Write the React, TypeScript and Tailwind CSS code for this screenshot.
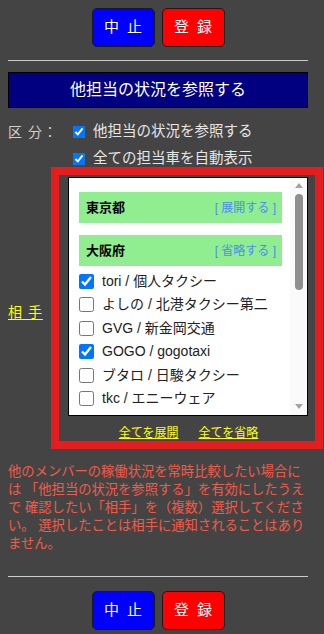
import React from "react";

const FONT = { fontFamily: '"Liberation Sans", "Noto Sans CJK JP", sans-serif' };

type Item = { id: string; name: string; checked: boolean };

const osaka: Item[] = [
  { id: "tori", name: "個人タクシー", checked: true },
  { id: "よしの", name: "北港タクシー第二", checked: false },
  { id: "GVG", name: "新金岡交通", checked: false },
  { id: "GOGO", name: "gogotaxi", checked: true },
  { id: "ブタロ", name: "日駿タクシー", checked: false },
  { id: "tkc", name: "エニーウェア", checked: false },
];

const ButtonRow = () => (
  <div className="flex justify-center gap-[7px]">
    <button className="w-[63px] h-[39px] rounded-[5px] border border-[#1a1a1a] bg-[#0000ff] text-white text-[15px] tracking-[2px] pl-[2px]">
      中 止
    </button>
    <button className="w-[63px] h-[39px] rounded-[5px] border border-[#1a1a1a] bg-[#ff0000] text-white text-[15px] tracking-[2px] pl-[2px]">
      登 録
    </button>
  </div>
);

const GroupHeader = ({ title, action }: { title: string; action: string }) => (
  <div className="h-[31px] bg-[#90ee90] flex items-center justify-between pl-[7px] pr-[6px]">
    <span className="text-[13px] font-bold text-black">{title}</span>
    <span className="text-[12px] text-[#4a8df0]">[ {action} ]</span>
  </div>
);

const Scrollbar = () => (
  <div className="w-[17px] shrink-0 bg-[#fafafa] flex flex-col items-center pt-[5px] pb-[6px]">
    <div className="w-0 h-0 border-l-[4px] border-r-[4px] border-b-[5px] border-l-transparent border-r-transparent border-b-[#a3a3a3]" />
    <div className="mt-[6px] w-[8px] h-[96px] rounded-full bg-[#8f8f8f]" />
    <div className="flex-1" />
    <div className="w-0 h-0 border-l-[4px] border-r-[4px] border-t-[5px] border-l-transparent border-r-transparent border-t-[#a3a3a3]" />
  </div>
);

export default function App() {
  return (
    <div className="w-full min-h-screen bg-[#444444] overflow-hidden" style={FONT}>
      <div className="w-[316px] px-2 pt-2 pb-1">
        <ButtonRow />

        <hr className="mt-[13px] border-0 border-t border-[#cccccc]" />

        <div className="mt-[11px] h-[36px] border border-black bg-[#000080] flex items-center justify-center text-white text-[16px]">
          他担当の状況を参照する
        </div>

        <div className="grid grid-cols-[43px_auto] mt-4">
          {/* 区分 */}
          <div className="text-[14px] leading-[16px] text-[#cfcfcf] whitespace-nowrap tracking-[1px]">区 分：</div>
          <div className="flex flex-col gap-[11px] pl-[22px]">
            <label className="flex items-center h-[16px] text-[14.5px] text-[#e6e6e6]">
              <input type="checkbox" defaultChecked className="m-0 w-[12px] h-[12px] mr-[8px]" />
              他担当の状況を参照する
            </label>
            <label className="flex items-center h-[16px] text-[14.5px] text-[#e6e6e6]">
              <input type="checkbox" defaultChecked className="m-0 w-[12px] h-[12px] mr-[8px]" />
              全ての担当車を自動表示
            </label>
          </div>

          {/* 相手 */}
          <div className="flex items-center pt-[8px]">
            <span className="text-[14px] text-[#ffff00] underline underline-offset-2 whitespace-nowrap tracking-[1px]">相 手</span>
          </div>
          <div className="w-[272px] border-[8px] border-[#e41e1e] pt-[2px] pl-[9px] pr-[6px]">
            <div className="w-[240px] h-[239px] bg-white border border-black flex overflow-hidden">
              <div className="flex-1 pt-[14px] pl-[10px] pr-[8px]">
                <GroupHeader title="東京都" action="展開する" />
                <div className="mt-[12px]">
                  <GroupHeader title="大阪府" action="省略する" />
                </div>
                <div className="mt-[3.5px]">
                  {osaka.map((it) => (
                    <label key={it.id} className="flex items-center h-[23.5px] text-[14px] text-[#222222] whitespace-nowrap">
                      <input type="checkbox" defaultChecked={it.checked} className="m-0 w-[15px] h-[15px] mr-[8px]" />
                      {it.id} / {it.name}
                    </label>
                  ))}
                  <div className="flex items-center h-[23.5px]">
                    <input type="checkbox" className="m-0 w-[15px] h-[15px]" />
                  </div>
                </div>
              </div>
              <Scrollbar />
            </div>
            <div className="h-[25px] pt-[10px] flex justify-center gap-5 text-[12px] leading-[14px] text-[#ffff00]">
              <span className="underline">全てを展開</span>
              <span className="underline">全てを省略</span>
            </div>
          </div>
        </div>

        <p className="mt-[14px] text-[13.3px] leading-[18px] text-[#f55a48]">
          他のメンバーの稼働状況を常時比較したい場合には 「他担当の状況を参照する」を有効にしたうえで 確認したい「相手」を（複数）選択してください。 選択したことは相手に通知されることはありません。
        </p>

        <hr className="mt-[23px] border-0 border-t border-[#cccccc]" />

        <div className="mt-[14px]">
          <ButtonRow />
        </div>
      </div>
    </div>
  );
}
